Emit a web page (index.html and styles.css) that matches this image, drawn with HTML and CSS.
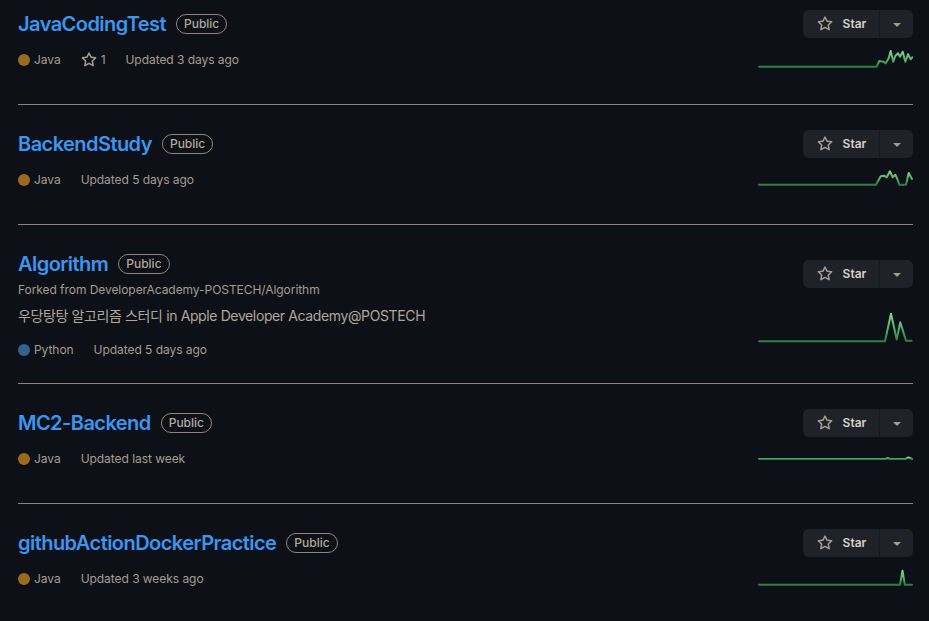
FILE: index.html
```html
<!DOCTYPE html>
<html lang="en">
<head>
<meta charset="utf-8">
<title>Repositories</title>
<link rel="stylesheet" href="styles.css">
</head>
<body>
<svg class="defs" width="0" height="0" aria-hidden="true">
  <defs>
    <linearGradient id="spark-grad" x1="0" y1="0" x2="0" y2="1">
      <stop offset="0%" stop-color="#7fd493"/>
      <stop offset="55%" stop-color="#52b068"/>
      <stop offset="100%" stop-color="#2b7f40"/>
    </linearGradient>
    <symbol id="star" viewBox="0 0 16 16"><path d="M8 .25a.75.75 0 0 1 .673.418l1.882 3.815 4.21.612a.75.75 0 0 1 .416 1.279l-3.046 2.970.719 4.192a.751.751 0 0 1-1.088.791L8 12.347l-3.766 1.980a.75.75 0 0 1-1.088-.790l.720-4.194L.818 6.374a.75.75 0 0 1 .416-1.280l4.210-.611L7.327.668A.75.75 0 0 1 8 .25Zm0 2.445L6.615 5.500a.75.75 0 0 1-.564.410l-3.097.450 2.240 2.184a.75.75 0 0 1 .216.664l-.528 3.084 2.769-1.456a.75.75 0 0 1 .698 0l2.770 1.456-.530-3.084a.75.75 0 0 1 .216-.664l2.240-2.183-3.096-.450a.75.75 0 0 1-.564-.410L8 2.694Z"/></symbol>
    <symbol id="caret" viewBox="0 0 16 16"><path d="m4.427 7.427 3.396 3.396a.25.25 0 0 0 .354 0l3.396-3.396A.25.25 0 0 0 11.396 7H4.604a.25.25 0 0 0-.177.427Z"/></symbol>
  </defs>
</svg>
<ul class="repo-list">
  <li class="repo">
    <div class="repo-main">
      <h3 class="repo-title"><a class="repo-name" href="#">JavaCodingTest</a><span class="label">Public</span></h3>
      <div class="meta">
        <span class="lang"><span class="dot java"></span>Java</span>
        <a class="stars" href="#"><svg class="ico16"><use href="#star"/></svg>1</a>
        <span>Updated 3 days ago</span>
      </div>
    </div>
    <div class="repo-side">
      <div class="star-btn"><button class="star-main"><svg class="ico16"><use href="#star"/></svg>Star</button><button class="star-drop"><svg class="ico16"><use href="#caret"/></svg></button></div>
      <span class="spark"><svg width="155" height="40" viewBox="0 0 155 40"><path d="M1 27.7 L118.7 27.7 L121.3 22 L125.3 22.7 L127.7 24.3 L130.7 19.3 L132.7 12 L135.3 22.7 L137.3 17 L140 14.3 L142 17.7 L144.7 12.7 L147.3 22.7 L150 15.3 L152.7 20.3 L154.3 18.3"/></svg></span>
    </div>
  </li>
  <li class="repo">
    <div class="repo-main">
      <h3 class="repo-title"><a class="repo-name" href="#">BackendStudy</a><span class="label">Public</span></h3>
      <div class="meta">
        <span class="lang"><span class="dot java"></span>Java</span>
        <span>Updated 5 days ago</span>
      </div>
    </div>
    <div class="repo-side">
      <div class="star-btn"><button class="star-main"><svg class="ico16"><use href="#star"/></svg>Star</button><button class="star-drop"><svg class="ico16"><use href="#caret"/></svg></button></div>
      <span class="spark"><svg width="155" height="40" viewBox="0 0 155 40"><path d="M1 25.7 L118 25.7 L122.7 17.3 L126 16.7 L128.7 18.3 L132 12.3 L134.7 18.3 L137.3 15.7 L139.3 20 L141.3 25.7 L148 25.7 L150.7 14 L154 20"/></svg></span>
    </div>
  </li>
  <li class="repo">
    <div class="repo-main">
      <h3 class="repo-title"><a class="repo-name" href="#">Algorithm</a><span class="label">Public</span></h3>
      <p class="fork">Forked from <a href="#">DeveloperAcademy-POSTECH/Algorithm</a></p>
      <p class="desc">우당탕탕 알고리즘 스터디 in Apple Developer Academy@POSTECH</p>
      <div class="meta">
        <span class="lang"><span class="dot python"></span>Python</span>
        <span>Updated 5 days ago</span>
      </div>
    </div>
    <div class="repo-side">
      <div class="star-btn"><button class="star-main"><svg class="ico16"><use href="#star"/></svg>Star</button><button class="star-drop"><svg class="ico16"><use href="#caret"/></svg></button></div>
      <span class="spark"><svg width="155" height="40" viewBox="0 0 155 40"><path d="M1 32.2 L127 32.2 L133 4.8 L138.7 30.5 L142.3 13.2 L148 31.8 L153.7 31.8"/></svg></span>
    </div>
  </li>
  <li class="repo">
    <div class="repo-main">
      <h3 class="repo-title"><a class="repo-name" href="#">MC2-Backend</a><span class="label">Public</span></h3>
      <div class="meta">
        <span class="lang"><span class="dot java"></span>Java</span>
        <span>Updated last week</span>
      </div>
    </div>
    <div class="repo-side">
      <div class="star-btn"><button class="star-main"><svg class="ico16"><use href="#star"/></svg>Star</button><button class="star-drop"><svg class="ico16"><use href="#caret"/></svg></button></div>
      <span class="spark"><svg width="155" height="40" viewBox="0 0 155 40"><path d="M1 21 L127 21 L129.7 20.2 L132 21 L147.5 21 L150.5 19.4 L154 21"/></svg></span>
    </div>
  </li>
  <li class="repo">
    <div class="repo-main">
      <h3 class="repo-title"><a class="repo-name" href="#">githubActionDockerPractice</a><span class="label">Public</span></h3>
      <div class="meta">
        <span class="lang"><span class="dot java"></span>Java</span>
        <span>Updated 3 weeks ago</span>
      </div>
    </div>
    <div class="repo-side">
      <div class="star-btn"><button class="star-main"><svg class="ico16"><use href="#star"/></svg>Star</button><button class="star-drop"><svg class="ico16"><use href="#caret"/></svg></button></div>
      <span class="spark"><svg width="155" height="40" viewBox="0 0 155 40"><path d="M1 26.7 L142 26.7 L144.5 12.7 L146.8 26.7 L154 26.7"/></svg></span>
    </div>
  </li>
</ul>
</body>
</html>
```

FILE: styles.css
```css
html, body {
  margin: 0;
  padding: 0;
  background: #0d1117;
}
body {
  font-family: Inter, "Noto Sans CJK KR", "Liberation Sans", sans-serif;
  color: #a59c91;
  font-size: 14px;
  line-height: 1.5;
  overflow: hidden;
}
.defs {
  position: absolute;
  width: 0;
  height: 0;
}
.repo-list {
  list-style: none;
  margin: 0 16px 0 18px;
  padding: 0;
}
.repo {
  display: flex;
  justify-content: space-between;
  padding: 24px 0;
  border-bottom: 1px solid #8f8475;
}
.repo:first-child {
  padding-top: 9px;
}
.repo-main {
  display: flex;
  flex-direction: column;
  align-items: flex-start;
}
.repo-title {
  display: flex;
  align-items: center;
  gap: 10px;
  margin: 0 0 4px;
  font-size: 20px;
  line-height: 30px;
  font-weight: 600;
}
.repo-name {
  color: #3b96f2;
  text-decoration: none;
  letter-spacing: -0.55px;
}
.label {
  font-size: 12px;
  font-weight: 500;
  line-height: 18px;
  padding: 0 7px;
  border: 1px solid #8f8475;
  border-radius: 2em;
  color: #b2a99d;
}
.fork {
  margin: -2px 0 6px;
  font-size: 12px;
  line-height: 18px;
  letter-spacing: -0.06px;
}
.fork a {
  color: inherit;
  text-decoration: none;
}
.desc {
  margin: 0 0 7px;
  font-size: 14px;
  line-height: 21px;
  color: #b0a79c;
  letter-spacing: -0.38px;
}
.meta {
  display: flex;
  align-items: center;
  gap: 20px;
  margin-top: 8px;
  font-size: 12px;
  line-height: 18px;
  letter-spacing: -0.05px;
}
.lang, .stars {
  display: flex;
  align-items: center;
  gap: 4px;
}
.stars {
  color: inherit;
  text-decoration: none;
}
.dot {
  width: 12px;
  height: 12px;
  border-radius: 50%;
  display: inline-block;
}
.dot.java { background: #9c6a1e; }
.dot.python { background: #33628f; }
.ico16 {
  width: 16px;
  height: 16px;
  fill: currentColor;
  flex: none;
}
.repo-side {
  display: flex;
  flex-direction: column;
  align-items: flex-end;
  justify-content: space-around;
  min-height: 71px;
}
.star-btn {
  display: flex;
  height: 28px;
  border-radius: 6px;
  background: #1f2329;
  overflow: hidden;
}
.star-btn button {
  border: 0;
  background: transparent;
  color: #d6d0c7;
  font-family: inherit;
  font-size: 12px;
  font-weight: 600;
  display: flex;
  align-items: center;
  justify-content: center;
  padding: 0;
  cursor: pointer;
}
.star-main {
  gap: 10px;
  padding: 0 12px 0 13px !important;
  width: 76px;
}
.star-main .ico16 {
  color: #a59c91;
}
.star-drop {
  width: 34px;
  border-left: 1px solid #171a1f !important;
}
.star-drop .ico16 {
  color: #a59c91;
}
.spark {
  display: block;
  width: 155px;
  height: 40px;
}
.spark svg {
  display: block;
}
.spark path {
  fill: none;
  stroke: url(#spark-grad);
  stroke-width: 2;
  stroke-linejoin: round;
  stroke-linecap: round;
}
```
